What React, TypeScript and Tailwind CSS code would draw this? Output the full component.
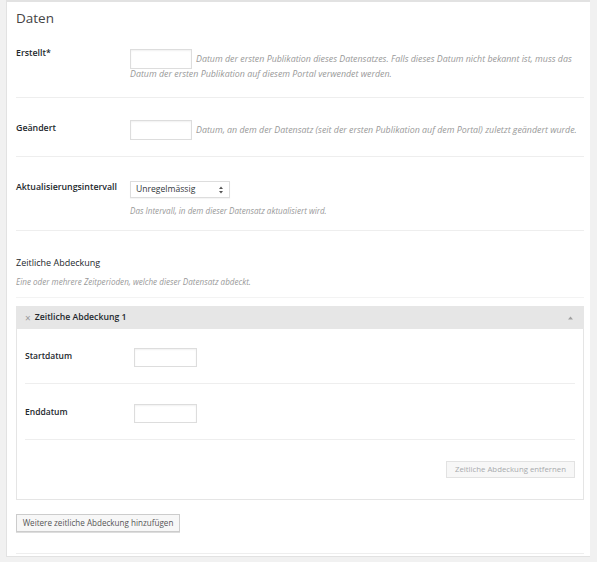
function DateInput({ className = "" }: { className?: string }) {
  return <span className={"block shrink-0 border border-[#dddddd] bg-white shadow-[inset_0_1px_2px_rgba(0,0,0,0.06)] " + className} />;
}

export default function App() {
  return (
    <div className="h-[562px] w-[597px] bg-[#f1f1f1] pl-[6px] pr-[7px] font-['Open_Sans',sans-serif]">
      <div className="border-t-2 border-b border-l border-[#e2e2e2] bg-white pl-[9px] pr-[6px]">
        <h2 className="pt-[7px] text-[13.5px] leading-[18px] text-[#444444]">Daten</h2>

        {/* Erstellt */}
        <div className="flex border-b border-[#eeeeee] pt-[22px] pb-[17px]">
          <div className="-mt-[2px] w-[114px] shrink-0 text-[8.8px] leading-[12px] font-semibold text-[#23282d]">Erstellt*</div>
          <div className="flex-1 text-[8.85px] italic text-[#999999]">
            <div className="flex items-center gap-[4px]">
              <DateInput className="h-[20px] w-[62px]" />
              <span className="whitespace-nowrap leading-[11px]">
                Datum der ersten Publikation dieses Datensatzes. Falls dieses Datum nicht bekannt ist, muss das
              </span>
            </div>
            <p className="mt-0 leading-[11px]">Datum der ersten Publikation auf diesem Portal verwendet werden.</p>
          </div>
        </div>

        {/* Geändert */}
        <div className="flex border-b border-[#eeeeee] pt-[22px] pb-[16px]">
          <div className="mt-[2px] w-[114px] shrink-0 text-[8.8px] leading-[12px] font-semibold text-[#23282d]">Geändert</div>
          <div className="flex flex-1 items-center gap-[4px] text-[8.85px] italic text-[#999999]">
            <DateInput className="h-[20px] w-[62px]" />
            <span className="whitespace-nowrap leading-[11px]">
              Datum, an dem der Datensatz (seit der ersten Publikation auf dem Portal) zuletzt geändert wurde.
            </span>
          </div>
        </div>

        {/* Aktualisierungsintervall */}
        <div className="flex border-b border-[#eeeeee] pt-[24px] pb-[13px]">
          <div className="w-[114px] shrink-0 text-[8.8px] leading-[12px] font-semibold text-[#23282d]">Aktualisierungsintervall</div>
          <div className="flex-1">
            <div className="flex h-[17px] w-[100px] items-center justify-between border border-[#dddddd] bg-white pl-[5px] pr-[6px] text-[8.6px] text-[#32373c] shadow-[0_1px_1px_rgba(0,0,0,0.04)]">
              <span>Unregelmässig</span>
              <svg width="4" height="8" viewBox="0 0 4 8" className="text-[#555555]">
                <path d="M2 0.5 L4 3 H0 Z M2 7.5 L4 5 H0 Z" fill="currentColor" />
              </svg>
            </div>
            <p className="mt-[7px] text-[8.1px] leading-[12px] italic text-[#999999]">
              Das Intervall, in dem dieser Datensatz aktualisiert wird.
            </p>
          </div>
        </div>

        {/* Zeitliche Abdeckung */}
        <div className="border-b border-[#f3f3f3] pt-[26px] pb-[9px]">
          <div className="text-[9px] leading-[12px] font-medium text-[#23282d]">Zeitliche Abdeckung</div>
          <p className="mt-[7px] text-[8.1px] leading-[12px] italic text-[#999999]">
            Eine oder mehrere Zeitperioden, welche dieser Datensatz abdeckt.
          </p>
        </div>

        <div className="mt-[8px]">
          <div className="flex h-[23px] items-center bg-[#e6e6e6] pl-[9px] pr-[11px]">
            <span className="mr-[4px] text-[10px] leading-none text-[#999999]">×</span>
            <span className="flex-1 text-[8.7px] font-semibold text-[#23282d]">Zeitliche Abdeckung 1</span>
            <svg width="5" height="4" viewBox="0 0 5 4" className="text-[#a0a0a0]">
              <path d="M2.5 0.5 L5 3.5 H0 Z" fill="currentColor" />
            </svg>
          </div>
          <div className="border-x border-b border-[#e5e5e5] px-[8px]">
            <div className="flex items-start border-b border-[#eeeeee] pt-[19px] pb-[16px]">
              <div className="mt-[2px] w-[109px] shrink-0 text-[8.5px] leading-[12px] font-semibold text-[#23282d]">Startdatum</div>
              <DateInput className="h-[19px] w-[63px]" />
            </div>
            <div className="flex items-start border-b border-[#eeeeee] pt-[20px] pb-[16px]">
              <div className="mt-[2px] w-[109px] shrink-0 text-[8.5px] leading-[12px] font-semibold text-[#23282d]">Enddatum</div>
              <DateInput className="h-[19px] w-[63px]" />
            </div>
            <div className="flex justify-end pt-[21px] pb-[21px]">
              <button className="h-[17px] w-[129px] border border-[#e2e2e2] bg-[#f7f7f7] text-[7.8px] text-[#a7aaad]">
                Zeitliche Abdeckung entfernen
              </button>
            </div>
          </div>
        </div>

        <div className="flex border-b border-[#eeeeee] pt-[14px] pb-[21px]">
          <button className="h-[18px] w-[164px] border border-[#cccccc] bg-[#f7f7f7] text-[8.1px] text-[#555555] shadow-[0_1px_0_#dddddd]">
            Weitere zeitliche Abdeckung hinzufügen
          </button>
        </div>
        <div className="h-[2px]" />
      </div>
    </div>
  );
}
